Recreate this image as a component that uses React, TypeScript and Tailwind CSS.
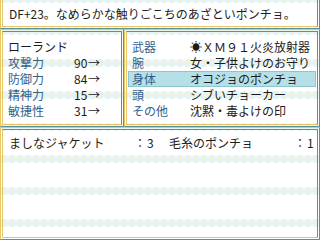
import React from 'react';

const lace =
  '[background:radial-gradient(circle_at_4px_16px,#fbf1c9_0_1.5px,transparent_2px)_0_15px/8px_32px,radial-gradient(circle_at_4px_16px,#e2f3f9_0_4px,transparent_4.5px)_0_15px/8px_32px,#ffffff]';

const stats = [
  { label: '攻撃力', value: '90' },
  { label: '防御力', value: '84' },
  { label: '精神力', value: '15' },
  { label: '敏捷性', value: '31' },
];

const equip = [
  { slot: '武器', item: '☀ＸＭ９１火炎放射器' },
  { slot: '腕', item: '女・子供よけのお守り' },
  { slot: '身体', item: 'オコジョのポンチョ', active: true },
  { slot: '頭', item: 'シブいチョーカー' },
  { slot: 'その他', item: '沈黙・毒よけの印' },
];

// double line frame: yellow outside-top/left, teal outside-bottom/right
const Frame: React.FC<{ className?: string; children?: React.ReactNode }> = ({ className = '', children }) => (
  <div className={`border border-t-[#e6c66a] border-l-[#e6c66a] border-b-[#5b9199] border-r-[#5b9199] p-px ${className}`}>
    <div className="h-full border border-t-[#5b9199] border-l-[#e6c66a] border-b-[#e6c66a] border-r-[#5b9199]">
      {children}
    </div>
  </div>
);

export default function App() {
  return (
    <div
      className={`w-[320px] h-[240px] overflow-hidden flex flex-col text-[12px] leading-[16px] text-[#1c1c1c] ${lace}`}
      style={{ fontFamily: '"Noto Sans CJK JP", sans-serif' }}
    >
      <Frame className="h-[31px] -mt-[2px] border-t-0">
        <div className="h-full flex items-center pl-[6px] pt-[2px]">
          DF+23。なめらかな触りごこちのあざといポンチョ。
        </div>
      </Frame>

      <div className="h-[98px] flex">
        <Frame className="w-[124px]">
          <div className="pl-[5px] pt-[7px] flex flex-col">
            <div className="h-[16px]">ローランド</div>
            {stats.map((s) => (
              <div key={s.label} className="h-[16px] flex items-center">
                <span className="w-[66px] text-[#33608a]">{s.label}</span>
                <span className="w-[13px] text-right">{s.value}</span>
                <span className="ml-px">→</span>
              </div>
            ))}
          </div>
        </Frame>
        <Frame className="flex-1">
          <div className="pt-[7px] flex flex-col">
            {equip.map((e) => (
              <div
                key={e.slot}
                className={`h-[16px] flex items-center mx-px ${
                  e.active ? 'bg-[#b6e0e8] border border-[#8cc4d0]' : 'border border-transparent'
                }`}
              >
                <span className="w-[61px] pl-[3px] text-[#33608a]">{e.slot}</span>
                <span>{e.item}</span>
              </div>
            ))}
          </div>
        </Frame>
      </div>

      <Frame className="flex-1">
        <div className="flex pt-[5px] pl-[6px]">
          <div className="w-[160px] flex items-center">
            <span className="w-[125px]">ましなジャケット</span>
            <span className="w-[13px]">：</span>
            <span>3</span>
          </div>
          <div className="flex items-center">
            <span className="w-[125px]">毛糸のポンチョ</span>
            <span className="w-[13px]">：</span>
            <span>1</span>
          </div>
        </div>
      </Frame>
    </div>
  );
}
